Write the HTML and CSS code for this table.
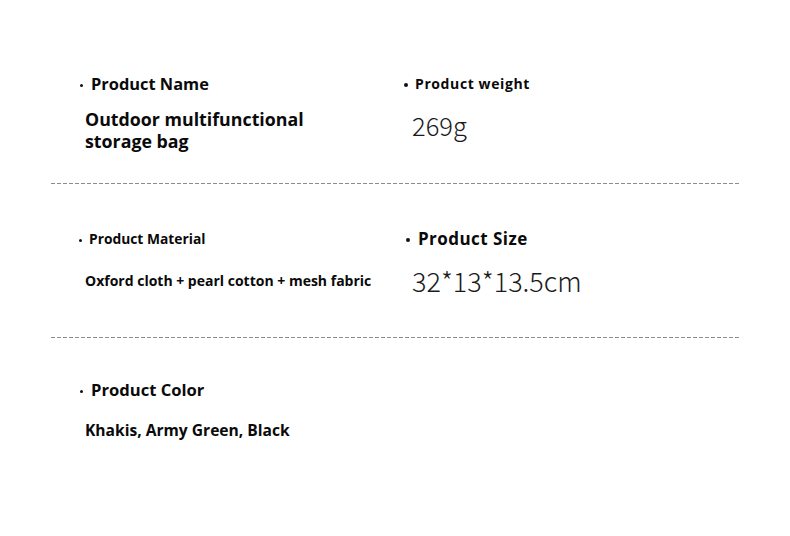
FILE: index.html
```html
<!DOCTYPE html>
<html>
<head>
<meta charset="utf-8">
<link rel="stylesheet" href="styles.css">
</head>
<body>
<div class="sheet">
  <section class="row row-1">
    <div class="cell">
      <div class="label label-name"><span class="dot"></span>Product Name</div>
      <div class="value value-name">Outdoor multifunctional<br>storage bag</div>
    </div>
    <div class="cell">
      <div class="label label-weight"><span class="dot"></span>Product weight</div>
      <div class="num num-weight">269g</div>
    </div>
  </section>
  <div class="rule"></div>
  <section class="row row-2">
    <div class="cell">
      <div class="label label-material"><span class="dot"></span>Product Material</div>
      <div class="value value-material">Oxford cloth + pearl cotton + mesh fabric</div>
    </div>
    <div class="cell">
      <div class="label label-size"><span class="dot"></span>Product Size</div>
      <div class="num num-size">32*13*13.5cm</div>
    </div>
  </section>
  <div class="rule"></div>
  <section class="row row-3">
    <div class="cell">
      <div class="label label-color"><span class="dot"></span>Product Color</div>
      <div class="value value-color">Khakis, Army Green, Black</div>
    </div>
  </section>
</div>
</body>
</html>
```
FILE: styles.css
```css
html, body {
  margin: 0;
  padding: 0;
  background: #ffffff;
}
body {
  width: 790px;
  height: 536px;
  overflow: hidden;
  font-family: "Open Sans", "Noto Sans", sans-serif;
  color: #0a0a0a;
}
.sheet {
  width: 688px;
  margin-left: 51px;
}
.row {
  display: grid;
  grid-template-columns: 325px 1fr;
  padding-left: 27px;
}
.row-1 { height: 183px; padding-top: 73px; box-sizing: border-box; }
.row-2 { height: 153px; padding-top: 44px; box-sizing: border-box; }
.row-3 { padding-top: 41px; }
.rule {
  height: 1px;
  background: repeating-linear-gradient(to right, #8c8c8c 0 4px, transparent 4px 6px);
}
.label {
  font-weight: 700;
  display: flex;
  align-items: center;
  white-space: nowrap;
}
.dot {
  flex: none;
  width: 3px;
  height: 3px;
  border-radius: 50%;
  background: #111111;
  margin-left: 2px;
  margin-right: 8px;
  position: relative;
  top: 1px;
}
.label-name { font-size: 16.4px; line-height: 22px; }
.label-weight { font-size: 14px; line-height: 22px; letter-spacing: 0.6px; }
.label-weight .dot { width: 4px; height: 4px; margin-left: 1px; margin-right: 7px; }
.label-material { font-size: 13.8px; line-height: 22px; }
.label-material .dot { margin-left: 1px; margin-right: 7px; }
.label-size { font-size: 17px; line-height: 22px; letter-spacing: 0.45px; }
.label-size .dot { width: 4px; height: 4px; margin-left: 3px; margin-right: 8px; }
.label-color { font-size: 16.6px; line-height: 22px; }
.value {
  font-weight: 700;
  padding-left: 7px;
}
.value-name { font-size: 17.8px; line-height: 22px; margin-top: 13px; }
.value-material { font-size: 14px; line-height: 20px; margin-top: 21px; }
.value-color { font-size: 15.6px; line-height: 22px; margin-top: 18px; }
.num {
  font-family: "Noto Sans CJK SC", "Noto Sans", sans-serif;
  font-weight: 300;
  color: #1a1a1a;
  padding-left: 9px;
}
.num-weight { font-size: 25.5px; line-height: 30px; margin-top: 15px; }
.num-size { font-size: 27px; line-height: 32px; margin-top: 15px; }
```
